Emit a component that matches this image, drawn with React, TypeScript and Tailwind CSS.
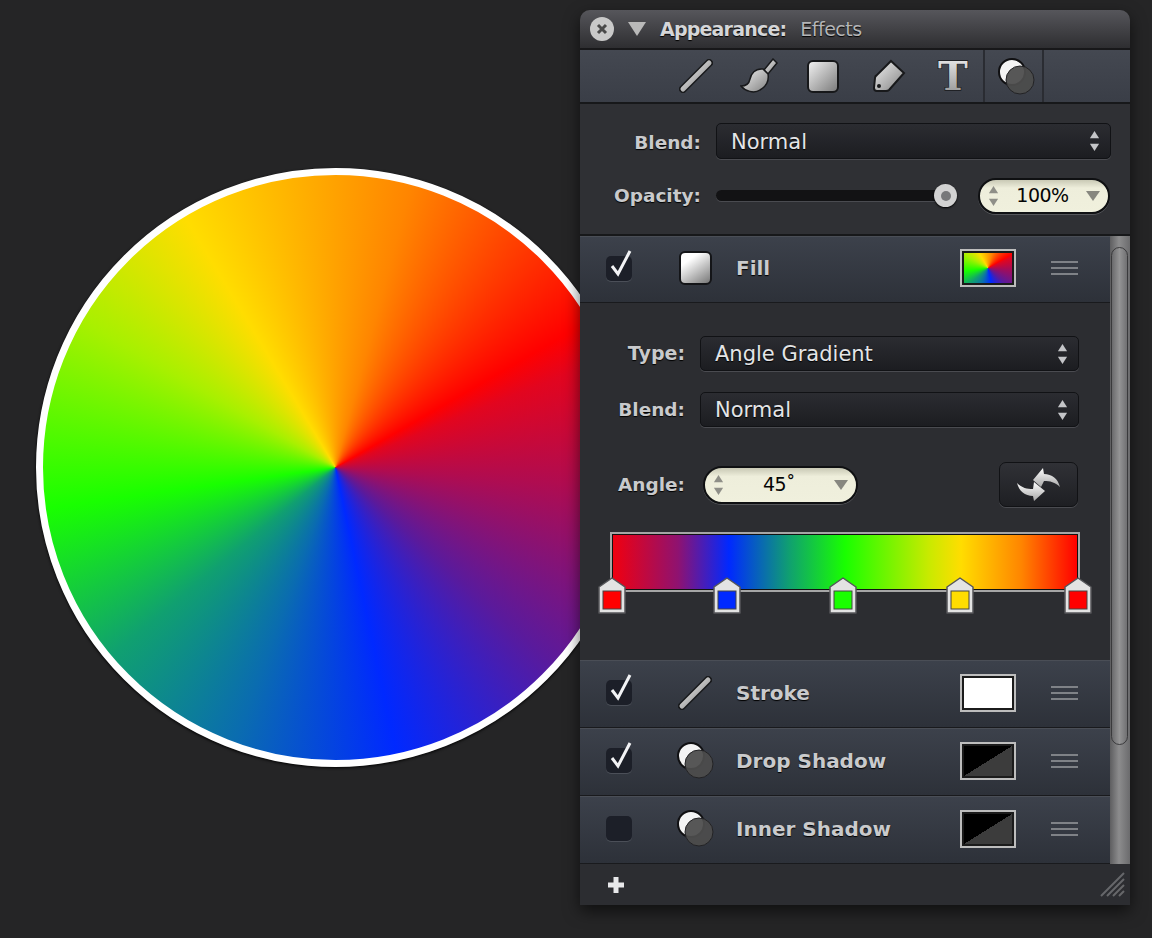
const font = "font-['DejaVu_Sans',sans-serif]";
const labelText = "font-bold text-[#c9cacc] [text-shadow:0_1px_1px_#000]";

function Defs() {
  return (
    <svg className="absolute h-0 w-0">
      <defs>
        <linearGradient id="metal" x1="0" y1="0" x2="1" y2="1">
          <stop offset="0" stopColor="#f2f2f2" />
          <stop offset="1" stopColor="#808080" />
        </linearGradient>
        <linearGradient id="metalDown" x1="0" y1="0" x2="0" y2="1">
          <stop offset="0" stopColor="#f4f4f4" />
          <stop offset="1" stopColor="#8c8c8c" />
        </linearGradient>
        <linearGradient id="swapGrad" x1="0" y1="0" x2="0" y2="1">
          <stop offset="0" stopColor="#ffffff" />
          <stop offset="1" stopColor="#a8a8a8" />
        </linearGradient>
      </defs>
    </svg>
  );
}

function LineIcon() {
  return (
    <svg width="34" height="34" viewBox="0 0 34 34">
      <line x1="4" y1="30" x2="30" y2="4" stroke="#18191b" strokeWidth="8" strokeLinecap="round" />
      <line x1="4" y1="30" x2="30" y2="4" stroke="url(#metal)" strokeWidth="5" strokeLinecap="round" />
    </svg>
  );
}

function BrushIcon() {
  return (
    <svg width="38" height="36" viewBox="0 0 38 36">
      <path
        d="M33 1 L37 5 L28 16 L24 12 Z"
        fill="url(#metal)"
        stroke="#18191b"
        strokeWidth="1.5"
      />
      <path
        d="M23 11 C15 10 11 16 10 21 C9 26 6 28 1 28 C5 33 14 36 20 32 C27 28 29 22 28 16 Z"
        fill="url(#metal)"
        stroke="#18191b"
        strokeWidth="1.5"
      />
    </svg>
  );
}

function SquareIcon() {
  return (
    <div className="h-[33px] w-[32px] rounded-[6px] border-2 border-[#17181a] bg-[linear-gradient(135deg,#f0f0f0,#7d7d7d)]" />
  );
}

function TagIcon() {
  return (
    <svg width="34" height="34" viewBox="0 0 34 34">
      <path
        d="M19 2 L32 14 L17 31 Q16 32 14 32 L5 32 Q2 32 2 29 L3 19 Q3 17 5 16 Z"
        fill="url(#metal)"
        stroke="#18191b"
        strokeWidth="2"
      />
      <circle cx="7" cy="27" r="2" fill="#18191b" />
    </svg>
  );
}

function TypeIcon() {
  return (
    <svg className="overflow-visible" width="34" height="36" viewBox="0 0 34 36">
      <text
        x="17"
        y="32"
        textAnchor="middle"
        fontFamily="'DejaVu Serif', serif"
        fontWeight="bold"
        fontSize="40"
        fill="url(#metalDown)"
        stroke="#18191b"
        strokeWidth="1.4"
        paintOrder="stroke"
      >
        T
      </text>
    </svg>
  );
}

function EffectsIcon() {
  return (
    <svg width="38" height="37" viewBox="0 0 38 37">
      <circle cx="15" cy="14" r="13" fill="#f4f4f4" stroke="#101012" strokeWidth="2" />
      <circle cx="23" cy="22" r="14" fill="#4c4c4d" fillOpacity="0.94" stroke="#232325" strokeWidth="1" />
    </svg>
  );
}

function Updown({ color }: { color: string }) {
  return (
    <svg width="11" height="22" viewBox="0 0 12 24" fill={color}>
      <polygon points="6,1 11,9 1,9" />
      <polygon points="6,23 11,15 1,15" />
    </svg>
  );
}

function SelectBox({ value, className }: { value: string; className: string }) {
  return (
    <div
      className={`flex items-center justify-between rounded-[5px] border border-[#111215] bg-[linear-gradient(#2b2c31,#1c1d21)] pr-[10px] shadow-[0_1px_0_#4a4b50] ${className}`}
    >
      <span className="mt-[3px] text-[#e4e5e7] text-[21px] [text-shadow:0_1px_1px_#000]">
        {value}
      </span>
      <Updown color="#c4c5c8" />
    </div>
  );
}

function Stepper({ value, className }: { value: string; className: string }) {
  return (
    <div
      className={`flex items-center justify-between rounded-full border-2 border-[#0f1012] bg-[linear-gradient(#c9c9b5,#eeeedb_25%,#f0f0dd)] pl-[8px] pr-[8px] shadow-[0_1px_0_#55565a] ${className}`}
    >
      <Updown color="#8f8f88" />
      <span className="text-[#050505] text-[19px] leading-none tracking-[-0.5px]">{value}</span>
      <svg width="14" height="10" viewBox="0 0 14 10" fill="#87877f">
        <polygon points="0,0 14,0 7,10" />
      </svg>
    </div>
  );
}

function Check({ on }: { on: boolean }) {
  return (
    <div className="h-[25px] w-[26px] rounded-[5px] bg-[#1c1f28] shadow-[0_1px_0_#4b4f58]">
      {on && (
        <svg className="overflow-visible" width="26" height="25" viewBox="0 0 26 25">
          <path
            d="M6 10 L12 18 L24 -5"
            fill="none"
            stroke="#f2f3f5"
            strokeWidth="3"
          />
        </svg>
      )}
    </div>
  );
}

function Handle() {
  return (
    <div className="flex w-[27px] flex-col gap-[4px]">
      <div className="h-[2px] bg-[#7f8287]" />
      <div className="h-[2px] bg-[#7f8287]" />
      <div className="h-[2px] bg-[#7f8287]" />
    </div>
  );
}

function Swatch({ fill }: { fill: string }) {
  return (
    <div className="h-[38px] w-[56px] border-2 border-[#bdbdbd] bg-[#1b1b1b] p-[2px]">
      <div className={`h-full w-full ${fill}`} />
    </div>
  );
}

function Row({
  on,
  icon,
  label,
  fill,
  height,
}: {
  on: boolean;
  icon: React.ReactNode;
  label: string;
  fill: string;
  height: string;
}) {
  return (
    <div
      className={`flex items-center border-t border-t-[#4a4e56] border-b border-b-[#191a1d] bg-[linear-gradient(#3c414b,#2d3139)] pb-[3px] pl-[26px] ${height}`}
    >
      <Check on={on} />
      <div className="ml-[43px] flex w-[40px] justify-center">{icon}</div>
      <div className={`ml-[21px] w-[224px] text-[20px] ${labelText}`}>{label}</div>
      <Swatch fill={fill} />
      <div className="ml-[35px]">
        <Handle />
      </div>
    </div>
  );
}

function Stop({ color, left }: { color: string; left: string }) {
  return (
    <svg className={`absolute top-[43px] ${left}`} width="28" height="37" viewBox="0 0 28 37">
      <path
        d="M14 1 L27 10 L27 36 L1 36 L1 10 Z"
        fill="#e3e3e3"
        stroke="#55565a"
        strokeWidth="1.5"
        strokeLinejoin="round"
      />
      <rect x="5" y="14" width="18" height="18" fill={color} stroke="#444" strokeWidth="1" />
    </svg>
  );
}

export default function App() {
  return (
    <div className={`flex h-[938px] w-[1152px] items-start overflow-hidden bg-[#252526] ${font}`}>
      <Defs />
      {/* wheel sits under the panel */}
      <div className="ml-[36px] mt-[168px] h-[599px] w-[599px] shrink-0 rounded-full border-[7px] border-white bg-[conic-gradient(from_60deg,#ff0000_0deg,#e2051f_8deg,#b00c50_34deg,#5a1a9c_72deg,#0029ff_108deg,#0a6cb0_140deg,#10a070_170deg,#19ff00_202deg,#a8f000_240deg,#ffdd00_269deg,#ff8500_315deg,#ff0000_360deg)] shadow-[0_1px_3px_#000]" />

      <div className="z-10 ml-[-55px] mt-[10px] flex w-[550px] shrink-0 flex-col overflow-hidden rounded-t-[10px] bg-[#2c2d31] shadow-[0_6px_16px_rgba(0,0,0,0.6)]">
        {/* title */}
        <div className="flex h-[40px] items-center border-b-2 border-b-[#18181a] bg-[linear-gradient(#56565b,#2e2e31)] pl-[10px]">
          <div className="flex h-[24px] w-[24px] items-center justify-center rounded-full bg-[#c9c9c9]">
            <svg width="12" height="12" viewBox="0 0 12 12">
              <path d="M2 2 L10 10 M10 2 L2 10" stroke="#4a4a4a" strokeWidth="3" />
            </svg>
          </div>
          <svg className="ml-[14px]" width="18" height="14" viewBox="0 0 18 14" fill="#b9b9b9">
            <polygon points="0,0 18,0 9,14" />
          </svg>
          <span className="ml-[14px] text-[19px] font-bold tracking-[-0.8px] text-[#d5d6d8] [text-shadow:0_1px_1px_#000]">
            Appearance:
          </span>
          <span className="ml-[14px] text-[19px] tracking-[-0.5px] text-[#b4b5b7] [text-shadow:0_1px_1px_#000]">
            Effects
          </span>
        </div>

        {/* tools */}
        <div className="flex h-[54px] items-center border-b-2 border-b-[#17181a] bg-[linear-gradient(#444851,#3a3e47)] pl-[99px]">
          <LineIcon />
          <div className="ml-[27px]">
            <BrushIcon />
          </div>
          <div className="ml-[29px]">
            <SquareIcon />
          </div>
          <div className="ml-[33px]">
            <TagIcon />
          </div>
          <div className="ml-[30px]">
            <TypeIcon />
          </div>
          <div className="ml-[13px] flex h-full w-[61px] items-center justify-center border-x-2 border-x-[#2a2c32] pl-[4px]">
            <EffectsIcon />
          </div>
        </div>

        {/* blend and opacity */}
        <div className="flex h-[132px] flex-col gap-[19px] border-b-2 border-b-[#17181a] bg-[#2f3034] pt-[19px]">
          <div className="flex items-center">
            <div className={`mt-[3px] w-[121px] text-right text-[18.5px] ${labelText}`}>Blend:</div>
            <SelectBox value="Normal" className="ml-[15px] h-[36px] w-[395px] pl-[14px]" />
          </div>
          <div className="flex h-[35px] items-center">
            <div className={`w-[121px] text-right text-[18.5px] ${labelText}`}>Opacity:</div>
            <div className="relative ml-[15px] h-[11px] w-[241px] rounded-full bg-[#121214] shadow-[0_1px_0_#4a4b50]">
              <div className="absolute right-[0px] top-[-6px] flex h-[23px] w-[23px] items-center justify-center rounded-full bg-[#d2d2d2] shadow-[0_1px_2px_#000]">
                <div className="h-[10px] w-[10px] rounded-full bg-[#77787a]" />
              </div>
            </div>
            <Stepper value="100%" className="ml-[21px] h-[36px] w-[132px]" />
          </div>
        </div>

        <div className="flex">
          <div className="w-[530px]">
            <Row
              on
              height="h-[67px]"
              icon={
                <div className="h-[34px] w-[33px] rounded-[6px] border-2 border-[#141518] bg-[linear-gradient(145deg,#ffffff_25%,#777777)]" />
              }
              label="Fill"
              fill="bg-[conic-gradient(from_60deg,#ff0000_0deg,#e2051f_5deg,#a00d5c_36deg,#5a1a9c_72deg,#0029ff_108deg,#0a6cb0_140deg,#10a070_170deg,#19ff00_202deg,#a8f000_240deg,#ffdd00_269deg,#ff8500_315deg,#ff0000_360deg)]"
            />

            {/* gradient options */}
            <div className="flex h-[357px] flex-col bg-[#2c2d31] pt-[33px]">
              <div className="flex items-center">
                <div className={`w-[105px] text-right text-[19px] ${labelText}`}>Type:</div>
                <SelectBox
                  value="Angle Gradient"
                  className="ml-[15px] h-[35px] w-[379px] pl-[14px]"
                />
              </div>
              <div className="mt-[21px] flex items-center">
                <div className={`w-[105px] text-right text-[18.5px] ${labelText}`}>Blend:</div>
                <SelectBox value="Normal" className="ml-[15px] h-[35px] w-[379px] pl-[14px]" />
              </div>
              <div className="mt-[35px] flex h-[45px] items-center">
                <div className={`w-[105px] text-right text-[18.5px] ${labelText}`}>Angle:</div>
                <Stepper value="45˚" className="ml-[18px] h-[38px] w-[155px]" />
                <div className="ml-[141px] flex h-[45px] w-[79px] items-center justify-center rounded-[7px] border border-[#111215] bg-[linear-gradient(#303136,#1e1f23)] shadow-[0_1px_0_#4a4b50]">
                  <svg width="44" height="34" viewBox="0 0 44 34">
                    <path
                      d="M16 12 L26 0 L27 6 C35 6 41 11 43 19 C38 14 33 13 27 13 L24 19 Z"
                      fill="url(#swapGrad)"
                    />
                    <path
                      d="M28 23 L17 33 L16 28 C8 28 2 23 0 15 C5 20 10 21 16 21 L17 14 Z"
                      fill="url(#swapGrad)"
                    />
                  </svg>
                </div>
              </div>
              <div className="relative ml-[30px] mt-[25px] h-[60px] w-[470px] border-2 border-[#a6a6a6] bg-[#111] p-[1px]">
                <div className="h-full w-full bg-[linear-gradient(90deg,#f00010,#8f1270_14%,#0029ff_25%,#10a070_38%,#19ff00_50%,#c8ea00_68%,#ffdd00_75%,#ff8500_88%,#ff0000)]" />
                <Stop color="#ff0000" left="left-[-14px]" />
                <Stop color="#0029ff" left="left-[101px]" />
                <Stop color="#19ff00" left="left-[217px]" />
                <Stop color="#ffdd00" left="left-[334px]" />
                <Stop color="#ff0000" left="left-[452px]" />
              </div>
            </div>

            <Row on height="h-[68px]" icon={<LineIcon />} label="Stroke" fill="bg-white" />
            <Row
              on
              height="h-[68px]"
              icon={<EffectsIcon />}
              label="Drop Shadow"
              fill="bg-[linear-gradient(to_top_left,#3c3c3c_50%,#000000_50%)]"
            />
            <Row
              on={false}
              height="h-[68px]"
              icon={<EffectsIcon />}
              label="Inner Shadow"
              fill="bg-[linear-gradient(to_top_left,#3c3c3c_50%,#000000_50%)]"
            />
          </div>

          {/* scrollbar */}
          <div className="w-[20px] bg-[linear-gradient(90deg,#5e5e60,#8c8c8d_45%,#6b6b6d)]">
            <div className="ml-[1px] mt-[11px] h-[498px] w-[17px] rounded-full border border-[#3a3a3c] bg-[linear-gradient(90deg,#6a6a6c,#949495_50%,#707072)]" />
          </div>
        </div>

        {/* footer */}
        <div className="relative flex h-[41px] items-center bg-[#2c2d31] pl-[28px]">
          <svg width="16" height="16" viewBox="0 0 16 16" fill="#e8e8ea">
            <rect x="5.5" y="0" width="5" height="16" />
            <rect x="0" y="5.5" width="16" height="5" />
          </svg>
          <svg className="absolute right-[5px] bottom-[8px]" width="25" height="25" viewBox="0 0 25 25">
            <path
              d="M1 24 L24 1 M7 24 L24 7 M13 24 L24 13 M19 24 L24 19"
              stroke="#66676a"
              strokeWidth="2"
            />
          </svg>
        </div>
      </div>
    </div>
  );
}
